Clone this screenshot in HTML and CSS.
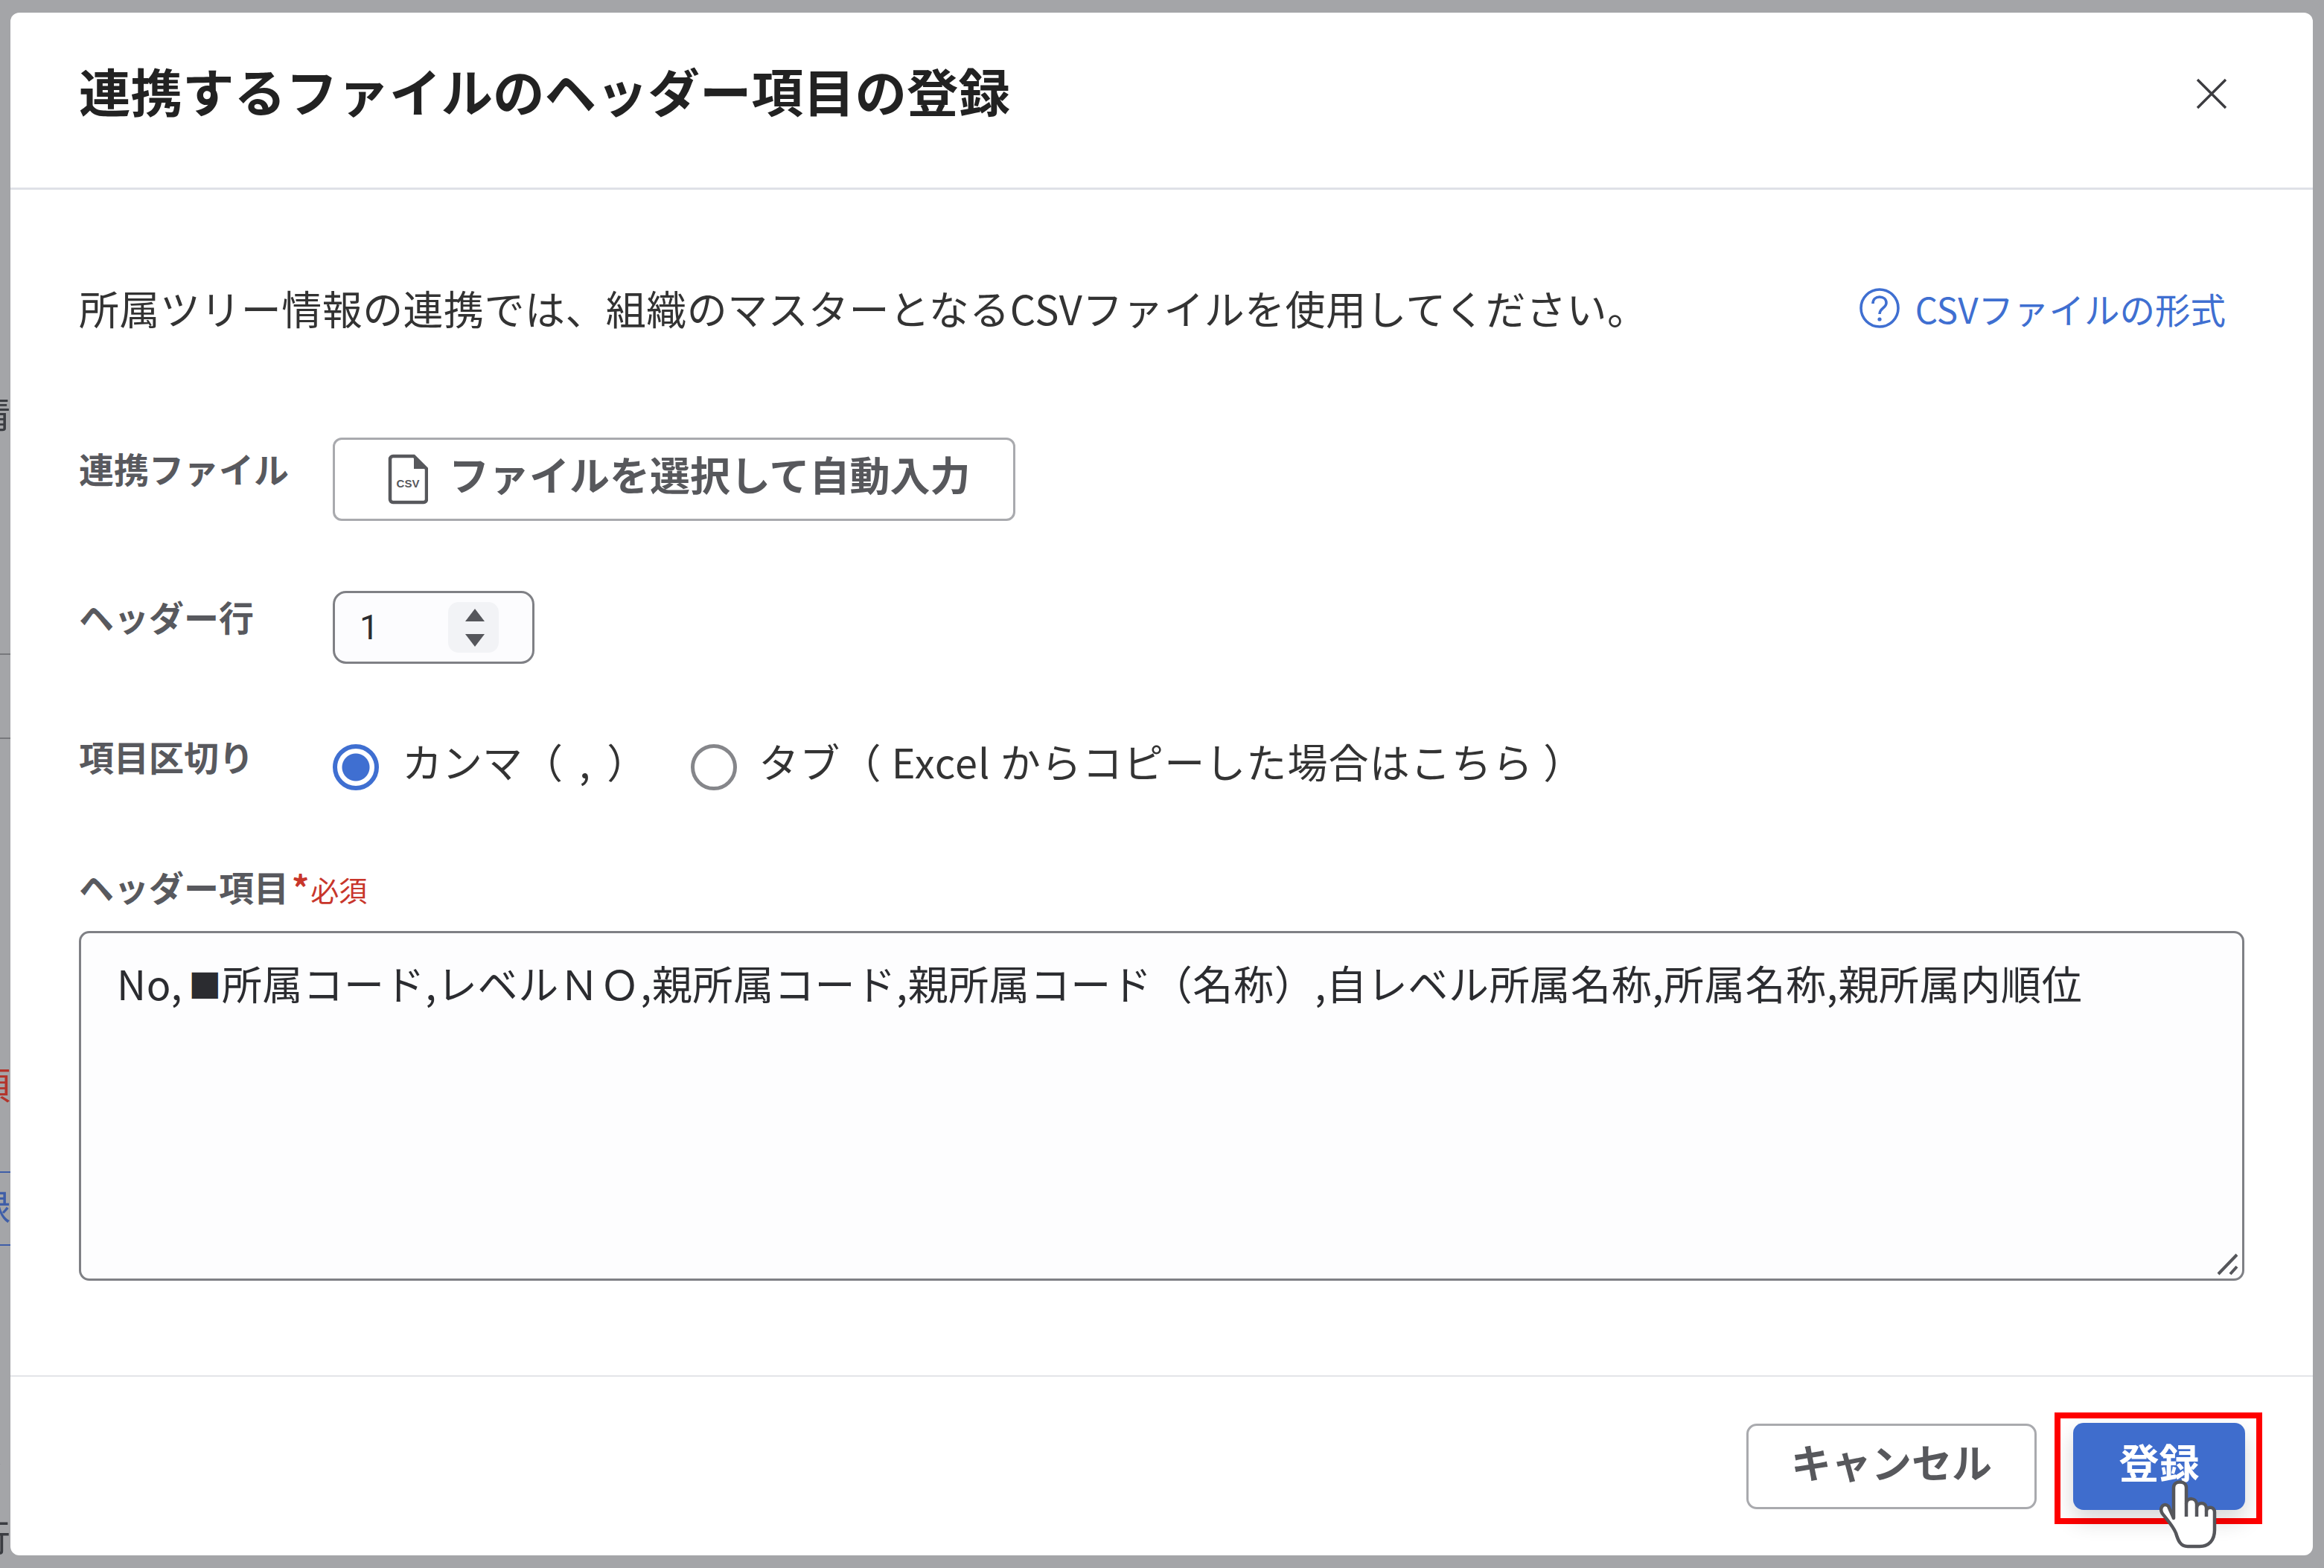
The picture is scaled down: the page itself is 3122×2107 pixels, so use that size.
FILE: index.html
```html
<!DOCTYPE html>
<html lang="ja">
<head>
<meta charset="utf-8">
<title>連携するファイルのヘッダー項目の登録</title>
<link rel="stylesheet" href="styles.css">
</head>
<body>
<div class="backdrop" aria-hidden="true">
  <span class="frag frag-a">情</span>
  <span class="rule rule-a"></span>
  <span class="rule rule-b"></span>
  <span class="frag frag-b">項</span>
  <span class="rule rule-c"></span>
  <span class="frag frag-c">録</span>
  <span class="rule rule-d"></span>
  <span class="frag frag-d">く</span>
  <span class="frag frag-e">行</span>
</div>
<main class="modal">
  <header class="modal-head">
    <h1 class="modal-title">連携するファイルのヘッダー項目の登録</h1>
    <svg class="close" viewBox="0 0 42 42"><path d="M2 2 40 40M40 2 2 40"/></svg>
  </header>
  <section class="modal-body">
    <div class="intro">
      <p class="intro-text">所属ツリー情報の連携では、組織のマスターとなるCSVファイルを使用してください。</p>
      <a class="help-link">
        <svg class="help-icon" viewBox="0 0 54 54"><circle cx="27" cy="27" r="25"/><path d="M18 21c0-6 4-9 9-9s9 3 9 8c0 7-9 7-9 15"/><circle class="dot" cx="27" cy="42" r="2.6"/></svg>
        <span>CSVファイルの形式</span>
      </a>
    </div>
    <div class="row row-file">
      <div class="label">連携ファイル</div>
      <button class="file-btn">
        <svg class="csv-icon" viewBox="0 0 54 68"><path class="sheet" d="M7 3h28l17 17v41a4 4 0 0 1-4 4H7a4 4 0 0 1-4-4V7a4 4 0 0 1 4-4z"/><path class="fold" d="M35 3l17 17H35z"/><text x="27" y="45">CSV</text></svg>
        <span class="file-btn-text">ファイルを選択して自動入力</span>
      </button>
    </div>
    <div class="row row-number">
      <div class="label">ヘッダー行</div>
      <div class="number">
        <span class="number-value">1</span>
        <span class="spinner"><i class="tri-up"></i><i class="tri-down"></i></span>
      </div>
    </div>
    <div class="row row-radio">
      <div class="label">項目区切り</div>
      <div class="radios">
        <span class="radio radio-on"></span><span class="radio-label first">カンマ（ , ）</span>
        <span class="radio"></span><span class="radio-label second">タブ（ Excel からコピーした場合はこちら ）</span>
      </div>
    </div>
    <div class="field-label"><span class="label">ヘッダー項目</span><span class="star">*</span><span class="req">必須</span></div>
    <div class="textarea">
      No,<span class="square">■</span>所属コード,レベルＮＯ,親所属コード,親所属コード（名称）,自レベル所属名称,所属名称,親所属内順位
      <svg class="resizer" viewBox="0 0 32 32"><path d="M3 29 28 3M19 29l9-10"/></svg>
    </div>
  </section>
  <footer class="modal-foot">
    <button class="btn btn-cancel">キャンセル</button>
    <div class="focus-box">
      <button class="btn btn-primary">登録</button>
    </div>
    <svg class="hand" viewBox="-3 -3 82 95"><path d="M19 50V9C19-1 36-1 36 9V30C37 22 49 22 50 31V36C51 28 62 28 63 36V40C64 34 74 34 74 42V66C74 80 66 88 54 88H38C28 88 25 80 22 70 18 60 10 52 4 44-1 36 6 28 12 34L19 50Z"/><path d="M36 30V48M50 36V48M63 40V48"/></svg>
  </footer>
</main>
</body>
</html>
```
FILE: styles.css
```css
* { box-sizing: border-box; }
html, body { margin: 0; height: 100%; }
body {
  width: 3122px;
  height: 2107px;
  overflow: hidden;
  position: relative;
  background: #a4a5a8;
  padding: 17px 15px 17px 14px;
  font-family: "Noto Sans CJK JP", "Noto Sans", sans-serif;
  color: #333;
}
.backdrop { position: absolute; inset: 0; overflow: hidden; }
.frag { position: absolute; font-size: 50px; line-height: 50px; color: #3b3d42; }
.frag-a { left: -36px; top: 528px; }
.frag-b { left: -36px; top: 1430px; color: #b3352c; }
.frag-c { left: -36px; top: 1595px; color: #3f5ea8; }
.frag-d { left: -36px; top: 1920px; }
.frag-e { left: -36px; top: 2038px; }
.rule { position: absolute; left: 0; width: 14px; height: 2px; background: #77787c; }
.rule-a { top: 878px; }
.rule-b { top: 991px; }
.rule-c { top: 1574px; background: #3f5ea8; }
.rule-d { top: 1672px; background: #3f5ea8; }

.modal {
  position: relative;
  height: 100%;
  background: #fff;
  border-radius: 12px;
  display: flex;
  flex-direction: column;
}
.modal-head {
  height: 238px;
  flex: none;
  border-bottom: 3px solid #dfe1e7;
  padding: 0 115px 0 92px;
  display: flex;
  align-items: center;
  justify-content: space-between;
}
.modal-title {
  margin: 0 0 28px;
  font-size: 69.5px;
  line-height: 90px;
  font-weight: 700;
  color: #222;
}
.close { width: 42px; height: 42px; fill: none; stroke: #3c3c40; stroke-width: 3.4; margin-bottom: 18px; }

.modal-body {
  flex: 1;
  padding: 119px 92px 0;
  display: flex;
  flex-direction: column;
}
.intro {
  height: 80px;
  display: flex;
  align-items: center;
  justify-content: space-between;
  padding-right: 25px;
  margin-bottom: 134px;
}
.intro-text { margin: 0; font-size: 54px; letter-spacing: .45px; line-height: 80px; color: #333; white-space: nowrap; }
.help-link { display: flex; align-items: center; gap: 21px; color: #3f6fd1; font-size: 47.5px; white-space: nowrap; }
.help-icon { width: 54px; height: 54px; fill: none; stroke: #3f6fd1; stroke-width: 3.6; }
.help-icon .dot { fill: #3f6fd1; stroke: none; }

.row { display: flex; align-items: center; }
.label { font-size: 47px; line-height: 60px; font-weight: 700; color: #58595e; white-space: nowrap; }
.row .label { width: 341px; height: 90px; flex: none; padding-bottom: 30px; }
.row-file { height: 112px; margin-bottom: 94px; }
.row-number { height: 98px; margin-bottom: 108px; }
.row-radio { height: 62px; margin-bottom: 96px; }

.file-btn {
  width: 917px;
  height: 112px;
  background: #fff;
  border: 3px solid #a9aaae;
  border-radius: 12px;
  padding: 0 0 0 71px;
  display: flex;
  align-items: center;
  gap: 28px;
  font: inherit;
  font-size: 54px;
  font-weight: 700;
  color: #57585c;
  white-space: nowrap;
}
.file-btn-text { margin-bottom: 16px; }
.csv-icon { width: 54px; height: 68px; flex: none; }
.csv-icon .sheet { fill: #fff; stroke: #57585c; stroke-width: 4.5; }
.csv-icon .fold { fill: #57585c; }
.csv-icon text { font-family: "Liberation Sans", sans-serif; font-size: 15px; font-weight: 700; fill: #57585c; text-anchor: middle; }

.number {
  width: 271px;
  height: 98px;
  background: #fcfcfe;
  border: 3px solid #7f8085;
  border-radius: 18px;
  display: flex;
  align-items: center;
  justify-content: space-between;
  padding: 0 45px 0 33px;
}
.number-value { font-family: Roboto, sans-serif; font-size: 46px; color: #2b2c30; }
.spinner {
  width: 68px;
  height: 68px;
  background: #f2f3f6;
  border-radius: 14px;
  display: flex;
  flex-direction: column;
  align-items: center;
  justify-content: center;
  gap: 17px;
}
.spinner i { display: block; width: 0; height: 0; margin-left: 3px; border-left: 13px solid transparent; border-right: 13px solid transparent; }
.tri-up { border-bottom: 17px solid #55565b; }
.tri-down { border-top: 17px solid #55565b; }

.radios { display: flex; align-items: center; font-size: 54px; color: #333; white-space: nowrap; }
.radio { width: 62px; height: 62px; border-radius: 50%; border: 5px solid #85868a; background: #fff; flex: none; margin-right: 29px; }
.radio-on { border: 6px solid #3f6fd1; background: radial-gradient(circle, #3f6fd1 0 18px, #fff 19px); margin-right: 31px; }
.radio-label { margin-bottom: 16px; line-height: 60px; }
.radio-label.first { margin-right: 59px; word-spacing: 10px; }
.radio-label.second { letter-spacing: 1.1px; }

.field-label { display: flex; align-items: baseline; height: 60px; margin-bottom: 33px; white-space: nowrap; }
.star { color: #c8362b; font-size: 46px; font-weight: 700; margin-left: 4px; }
.req { color: #c8362b; font-size: 38px; margin-left: 2px; }

.textarea {
  position: relative;
  height: 470px;
  background: #fdfdfe;
  border: 3px solid #7f8085;
  border-radius: 14px;
  padding: 32px 48px;
  font-size: 54px;
  letter-spacing: .67px;
  line-height: 70px;
  color: #2b2c30;
  white-space: nowrap;
}
.square { font-size: 44px; margin-left: 8px; vertical-align: 3px; }
.resizer { position: absolute; right: 3px; bottom: 3px; width: 32px; height: 32px; fill: none; stroke: #55565b; stroke-width: 4; }

.modal-foot {
  position: relative;
  height: 242px;
  flex: none;
  border-top: 2px solid #e3e4e8;
  padding: 48px 68px 0 0;
  display: flex;
  align-items: flex-start;
  justify-content: flex-end;
  gap: 24px;
}
.btn { font: inherit; font-size: 54px; font-weight: 700; border-radius: 14px; white-space: nowrap; padding: 0 0 14px; }
.btn-cancel {
  width: 390px;
  height: 115px;
  margin-top: 15px;
  background: #fff;
  border: 3px solid #a9aaae;
  color: #57585c;
}
.focus-box {
  width: 279px;
  height: 150px;
  border: 8px solid #ff0000;
  padding: 6px 15px 0 17px;
}
.btn-primary {
  display: block;
  width: 231px;
  height: 117px;
  background: #3f6dcd;
  border: none;
  color: #fff;
  box-shadow: 0 14px 30px rgba(0, 0, 0, .16);
}
.hand {
  position: absolute;
  right: 127px;
  top: 137px;
  width: 82px;
  height: 95px;
  fill: #fff;
  stroke: #55565b;
  stroke-width: 4.5;
  stroke-linejoin: round;
}
```
